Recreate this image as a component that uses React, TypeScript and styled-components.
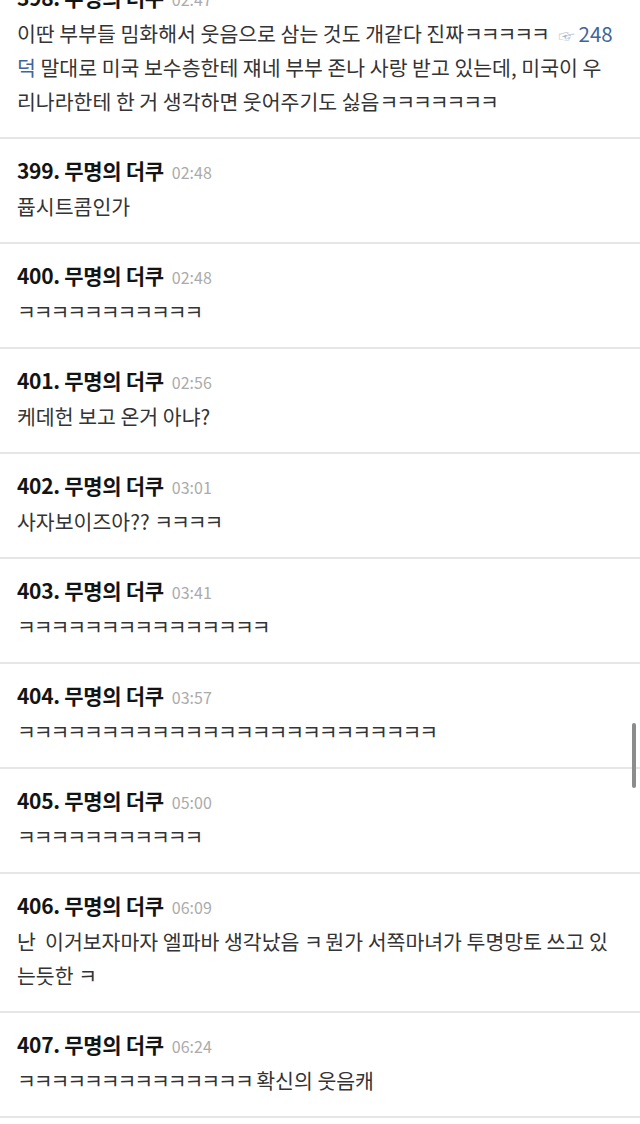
import React from "react";
import styled, { createGlobalStyle } from "styled-components";

const GlobalStyle = createGlobalStyle`
  html, body {
    margin: 0;
    padding: 0;
    background: #ffffff;
  }
  body {
    font-family: "Noto Sans CJK KR", "Noto Sans", sans-serif;
    overflow: hidden;
  }
`;

const Page = styled.div`
  position: relative;
  width: 640px;
  height: 1124px;
  overflow: hidden;
  background: #ffffff;
`;

const List = styled.div`
  display: flex;
  flex-direction: column;
  margin-top: -34px;
`;

const Item = styled.article`
  padding: 17px 16px 19px 17px;
  border-bottom: 2px solid #e6e6e6;
`;

const Header = styled.div`
  display: flex;
  align-items: baseline;
  gap: 8px;
  height: 28px;
  line-height: 28px;
`;

const Author = styled.span`
  font-size: 21px;
  font-weight: 700;
  color: #141414;
  letter-spacing: -0.3px;
`;

const Time = styled.span`
  font-size: 16px;
  color: #ababab;
`;

const Body = styled.div`
  margin-top: 5px;
  font-size: 20.5px;
  line-height: 34px;
  color: #343434;
  white-space: pre;
`;

const Line = styled.div`
  height: 34px;
`;

const Laugh = styled.span`
  letter-spacing: -2.1px;
`;

const Ref = styled.span`
  color: #40659a;
`;

const Pointer = styled.span`
  font-size: 16px;
  color: #a9b8cc;
  margin: 0 4px 0 6px;
`;

const Scrollbar = styled.div`
  position: absolute;
  right: 4px;
  top: 723px;
  width: 4px;
  height: 65px;
  border-radius: 2px;
  background: #8c8c8c;
`;

type Seg = string | { k: number } | { ref: string; ptr?: boolean };

type Post = {
  no: number;
  time: string;
  lines: Seg[][];
};

const k = (n: number) => ({ k: n });

const posts: Post[] = [
  {
    no: 398,
    time: "02:47",
    lines: [
      ["이딴 부부들 밈화해서 웃음으로 삼는 것도 개같다 진짜", k(5), " ", { ref: "248", ptr: true }],
      [{ ref: "덕" }, " 말대로 미국 보수층한테 쟤네 부부 존나 사랑 받고 있는데, 미국이 우"],
      ["리나라한테 한 거 생각하면 웃어주기도 싫음", k(7)],
    ],
  },
  { no: 399, time: "02:48", lines: [["퓹시트콤인가"]] },
  { no: 400, time: "02:48", lines: [[k(11)]] },
  { no: 401, time: "02:56", lines: [["케데헌 보고 온거 아냐?"]] },
  { no: 402, time: "03:01", lines: [["사자보이즈아?? ", k(4)]] },
  { no: 403, time: "03:41", lines: [[k(15)]] },
  { no: 404, time: "03:57", lines: [[k(25)]] },
  { no: 405, time: "05:00", lines: [[k(11)]] },
  {
    no: 406,
    time: "06:09",
    lines: [
      ["난  이거보자마자 엘파바 생각났음 ", k(1), " 뭔가 서쪽마녀가 투명망토 쓰고 있"],
      ["는듯한 ", k(1)],
    ],
  },
  { no: 407, time: "06:24", lines: [[k(14), " 확신의 웃음캐"]] },
];

function renderSeg(seg: Seg, i: number) {
  if (typeof seg === "string") return <React.Fragment key={i}>{seg}</React.Fragment>;
  if ("k" in seg) return <Laugh key={i}>{"ㅋ".repeat(seg.k)}</Laugh>;
  return (
    <Ref key={i}>
      {seg.ptr && <Pointer>☞</Pointer>}
      {seg.ref}
    </Ref>
  );
}

export default function App() {
  return (
    <Page>
      <GlobalStyle />
      <List>
        {posts.map((p) => (
          <Item key={p.no}>
            <Header>
              <Author>{p.no}. 무명의 더쿠</Author>
              <Time>{p.time}</Time>
            </Header>
            <Body>
              {p.lines.map((line, li) => (
                <Line key={li}>{line.map(renderSeg)}</Line>
              ))}
            </Body>
          </Item>
        ))}
      </List>
      <Scrollbar />
    </Page>
  );
}
